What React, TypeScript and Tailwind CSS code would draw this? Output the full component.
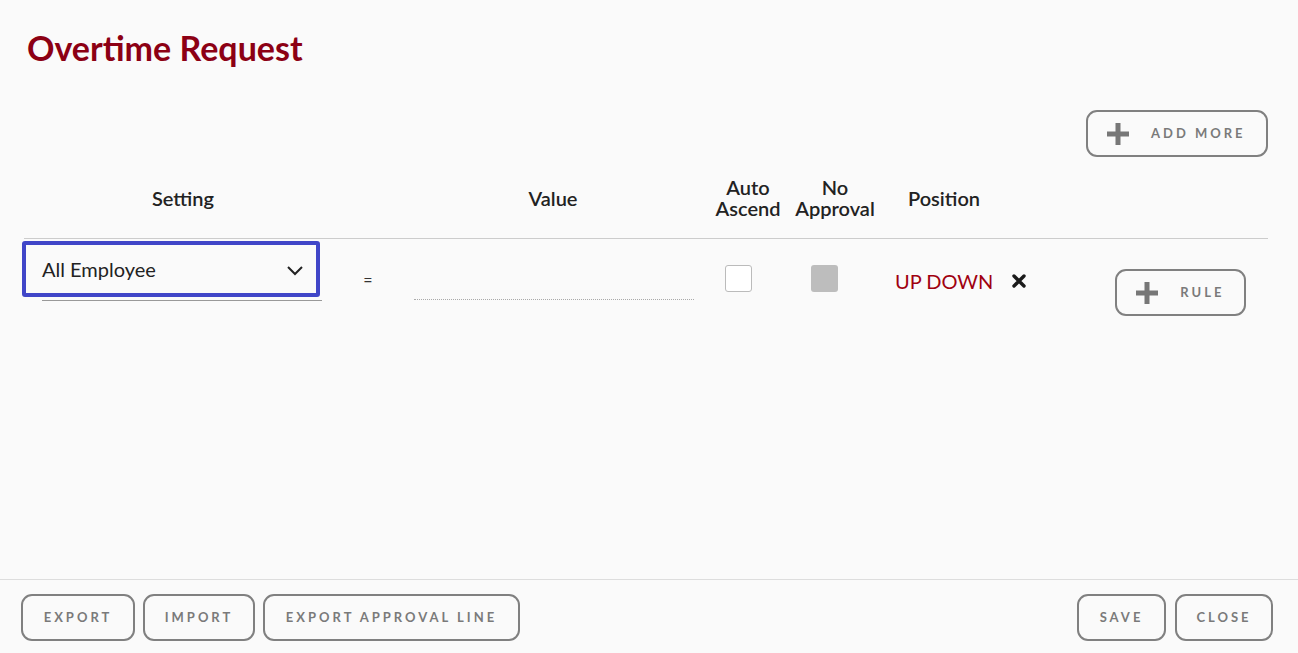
import React from "react";

const Plus = () => (
  <svg width="22" height="22" viewBox="0 0 22 22" className="shrink-0">
    <rect x="8.5" y="0" width="5" height="22" fill="#777" />
    <rect x="0" y="8.5" width="22" height="5" fill="#777" />
  </svg>
);

const Btn = ({ children, className = "" }: { children: React.ReactNode; className?: string }) => (
  <button
    className={
      "h-[47px] border-2 border-[#808080] rounded-[11px] bg-[#fafafa] text-[#7a7a7a] font-bold text-[13px] tracking-[0.23em] flex items-center " +
      className
    }
  >
    {children}
  </button>
);

export default function App() {
  return (
    <div
      className="w-[1298px] h-[653px] bg-[#fafafa] flex flex-col overflow-hidden"
      style={{ fontFamily: "Lato, 'Open Sans', sans-serif" }}
    >
      <div className="flex-1 flex flex-col">
        <h1 className="pl-[27px] pt-[28px] text-[34px] leading-[40px] font-bold text-[#8c0014]">Overtime Request</h1>
        <div className="flex justify-end pr-[30px] mt-[42px]">
          <Btn className="w-[182px] pl-[19px] gap-[22px]">
            <Plus />
            <span>ADD MORE</span>
          </Btn>
        </div>
        <div className="mx-[24px] mr-[30px] mt-[20px] border-b border-[#cccccc] h-[62px] grid grid-cols-[318px_50px_322px_68px_106px_112px_1fr] items-start text-[20px] leading-[21px] font-semibold text-[#222] text-center">
          <div className="pt-[11px]">Setting</div>
          <div />
          <div className="pt-[11px]">Value</div>
          <div className="flex flex-col items-center">
            <span className="block h-[21px]">Auto</span>
            <span className="block h-[21px]">Ascend</span>
          </div>
          <div className="flex flex-col items-center">
            <span className="block h-[21px]">No</span>
            <span className="block h-[21px]">Approval</span>
          </div>
          <div className="pt-[11px]">Position</div>
          <div />
        </div>
        <div className="flex items-start mt-[2px]">
          <div className="ml-[22px] w-[298px] flex flex-col">
            <div className="h-[56px] border-[4px] border-[#4046c8] rounded-[3px] flex items-center justify-between pl-[16px] pr-[12px] text-[20px] text-[#222]">
              <span>All Employee</span>
              <svg width="18" height="12" viewBox="0 0 18 12" className="mt-[4px]">
                <path d="M2 2 L9 9 L16 2" fill="none" stroke="#222" strokeWidth="2" />
              </svg>
            </div>
            <div className="ml-[20px] mr-[-2px] mt-[3px] h-px bg-[#999]" />
          </div>
          <div className="w-[94px] text-center text-[16px] text-[#333] pt-[27px] pl-[2px]">=</div>
          <div className="w-[280px] mt-[58px] border-b border-dotted border-[#aaa]" />
          <div className="ml-[31px] mt-[24px] w-[27px] h-[27px] border border-[#bbb] rounded-[3px] bg-white" />
          <div className="ml-[59px] mt-[24px] w-[27px] h-[27px] rounded-[3px] bg-[#bdbdbd]" />
          <div className="ml-[57px] mt-[28px] text-[20px] leading-[24px] text-[#a00010]">UP DOWN</div>
          <svg width="14" height="14" viewBox="0 0 14 14" className="ml-[19px] mt-[33px]">
            <path d="M2 2 L12 12 M12 2 L2 12" stroke="#1a1a1a" strokeWidth="3.4" strokeLinecap="round" />
          </svg>
          <Btn className="ml-[89px] mt-[28px] w-[131px] pl-[19px] gap-[22px]">
            <Plus />
            <span>RULE</span>
          </Btn>
        </div>
      </div>
      <div className="h-[74px] border-t border-[#dddddd] flex items-start justify-between pt-[14px] pl-[21px] pr-[25px]">
        <div className="flex gap-[8px]">
          <Btn className="w-[114px] justify-center">EXPORT</Btn>
          <Btn className="w-[112px] justify-center">IMPORT</Btn>
          <Btn className="w-[257px] justify-center">EXPORT APPROVAL LINE</Btn>
        </div>
        <div className="flex gap-[9px]">
          <Btn className="w-[89px] justify-center">SAVE</Btn>
          <Btn className="w-[98px] justify-center">CLOSE</Btn>
        </div>
      </div>
    </div>
  );
}
